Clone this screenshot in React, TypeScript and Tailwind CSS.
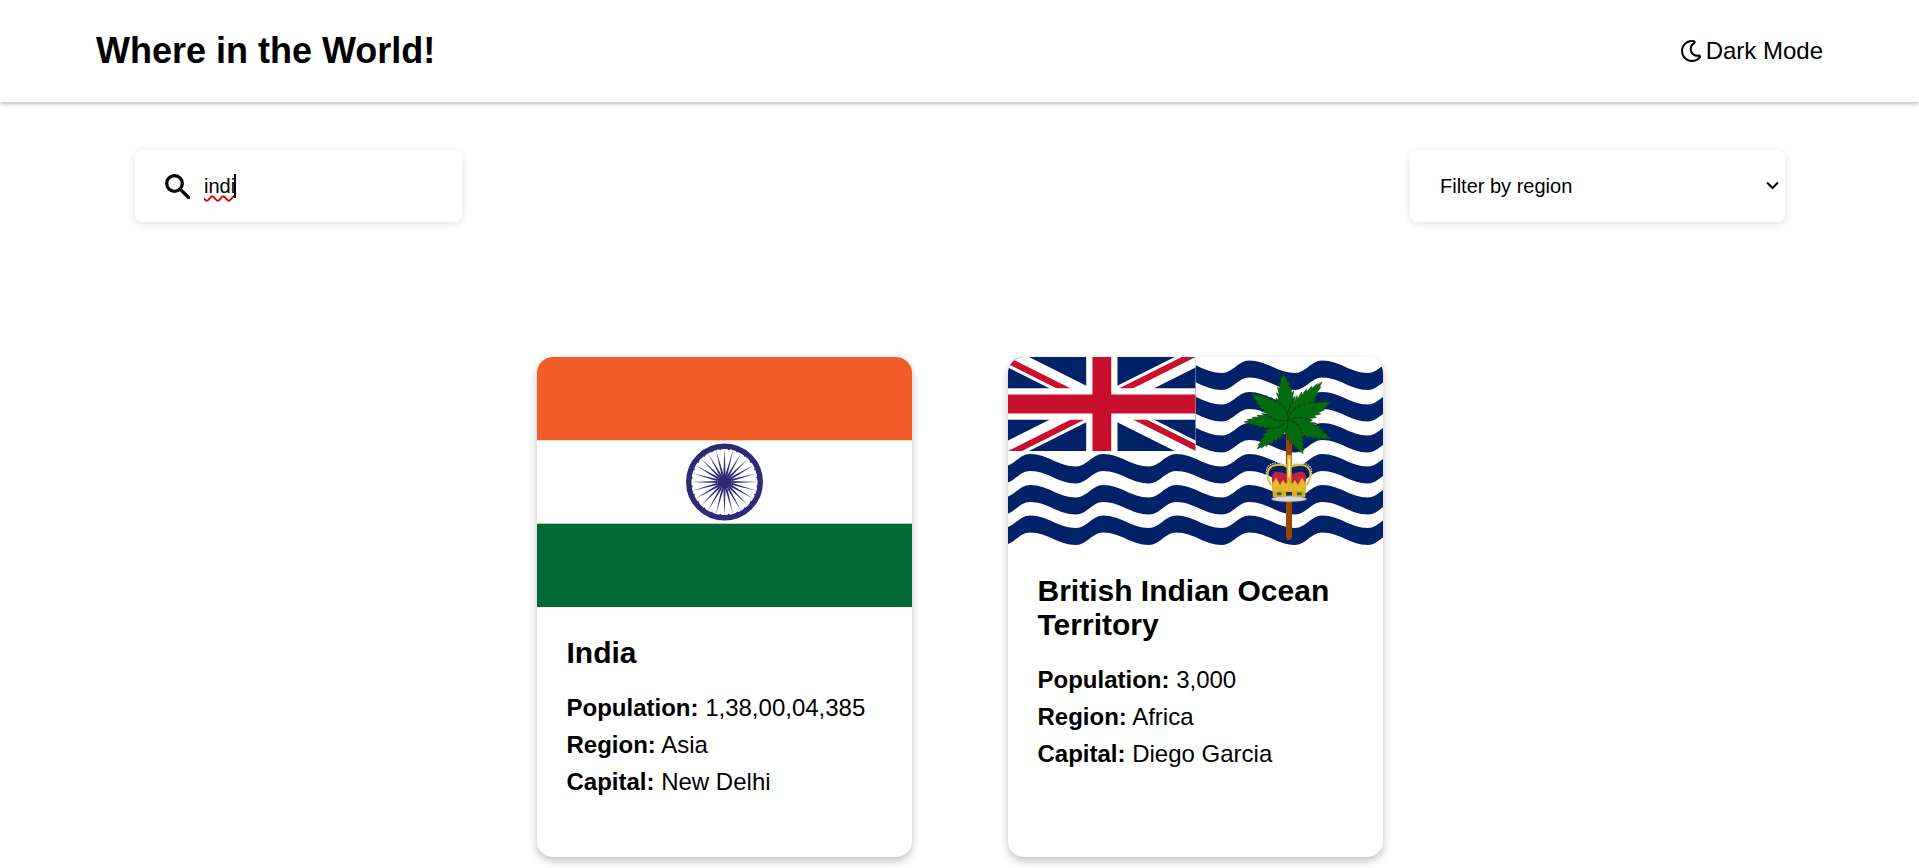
import React from "react";
import { FaRegMoon } from "react-icons/fa";

const font = "font-['Liberation_Sans',Arial,sans-serif]";

function bandPath(t: number) {
  const P = 73;
  const F = 46;
  const A = 12.5;
  const H = 17;
  const crests: number[] = [];
  for (let c = 22 - P * 2; c < 375 + P * 2; c += P) crests.push(c);
  const fh = F * 0.4;
  const rh = (P - F) * 0.4;
  let d = `M${crests[0]},${t}`;
  for (const c of crests) {
    d += ` C${c + fh},${t} ${c + F - fh},${t + A} ${c + F},${t + A}`;
    d += ` C${c + F + rh},${t + A} ${c + P - rh},${t} ${c + P},${t}`;
  }
  const last = crests[crests.length - 1] + P;
  d += ` L${last},${t + H}`;
  for (const c of [...crests].reverse()) {
    d += ` C${c + P - rh},${t + H} ${c + F + rh},${t + H + A} ${c + F},${t + H + A}`;
    d += ` C${c + F - fh},${t + H + A} ${c + fh},${t + H} ${c},${t + H}`;
  }
  return d + " Z";
}

function frondPath(x0: number, y0: number, x1: number, y1: number, w: number) {
  const dx = x1 - x0;
  const dy = y1 - y0;
  const len = Math.hypot(dx, dy);
  const ux = dx / len;
  const uy = dy / len;
  const nx = -uy;
  const ny = ux;
  const n = 9;
  const pts: string[] = [`${x0},${y0}`];
  const side = (s: number, rev: boolean) => {
    const arr: string[] = [];
    for (let i = 1; i < n; i++) {
      const f = i / n;
      const width = w * Math.sin(Math.PI * Math.pow(f, 0.7));
      const bx = x0 + dx * f;
      const by = y0 + dy * f;
      arr.push(`${(bx + nx * s * width + ux * 1.5).toFixed(1)},${(by + ny * s * width + uy * 1.5).toFixed(1)}`);
      arr.push(`${(bx + nx * s * width * 0.7 - ux * 0.5).toFixed(1)},${(by + ny * s * width * 0.7 - uy * 0.5).toFixed(1)}`);
    }
    return rev ? arr.reverse() : arr;
  };
  pts.push(...side(1, false));
  pts.push(`${x1},${y1}`);
  pts.push(...side(-1, true));
  return "M" + pts.join(" L") + " Z";
}

function IndiaFlag() {
  const spokes = Array.from({ length: 24 }, (_, i) => (i * 360) / 24);
  return (
    <svg viewBox="0 0 375 250" className="block w-full h-[250px]">
      <rect width="375" height="250" fill="#fff" />
      <rect width="375" height="83.3" fill="#f35d27" />
      <rect y="166.7" width="375" height="83.3" fill="#016934" />
      <g transform="translate(187.5 125)">
        <circle r="35.8" fill="#fff" stroke="#2e2a76" strokeWidth="5.4" />
        {spokes.map((a) => (
          <g key={a} transform={`rotate(${a})`}>
            <path d="M-1.1,-7 L0,-33.5 L1.1,-7 Z" fill="#2e2a76" />
            <circle cx="0" cy="-33" r="0.9" transform="rotate(7.5)" fill="#2e2a76" />
          </g>
        ))}
        <circle r="7.2" fill="#2e2a76" />
      </g>
    </svg>
  );
}

function BiotFlag() {
  const tips: [number, number][] = [
    [275, 15],
    [314, 25],
    [323, 45],
    [323, 82],
    [295, 97],
    [249, 92],
    [236, 65],
    [243, 36],
  ];
  return (
    <svg viewBox="0 0 375 188" className="block w-full h-[188px]">
      <rect width="375" height="188" fill="#fff" />
      {[3.5, 35, 66].map((t) => (
        <path key={t} d={bandPath(t)} fill="#012169" />
      ))}
      <rect width="187.7" height="100" fill="#fff" />
      {[97, 128, 158.5].map((t) => (
        <path key={t} d={bandPath(t)} fill="#012169" />
      ))}
      <svg x="0" y="0" width="187.7" height="94" viewBox="0 0 60 30" preserveAspectRatio="none">
        <defs>
          <clipPath id="jack">
            <path d="M30,15h30v15zv15h-30zh-30v-15zv-15h30z" />
          </clipPath>
        </defs>
        <rect width="60" height="30" fill="#012169" />
        <path d="M0,0 60,30M60,0 0,30" stroke="#fff" strokeWidth="6" />
        <path d="M0,0 60,30M60,0 0,30" clipPath="url(#jack)" stroke="#C8102E" strokeWidth="4" />
        <path d="M30,0v30M0,15h60" stroke="#fff" strokeWidth="10" />
        <path d="M30,0v30M0,15h60" stroke="#C8102E" strokeWidth="6" />
      </svg>
      <path d="M281,62 V180" stroke="#9a4500" strokeWidth="6" strokeLinecap="round" />
      {tips.map(([x, y], i) => (
        <path
          key={i}
          d={frondPath(280, 63, x, y, Math.hypot(x - 280, y - 63) > 45 ? 10 : 9)}
          fill="#046c10"
          stroke="#0e3b12"
          strokeWidth="0.5"
        />
      ))}
      {/* crown */}
      <g>
        <path d="M265,128 C262,118 265,114 271,115 C275,115.5 279,117 281,119 C283,117 287,115.5 291,115 C297,114 300,118 297,128 Z" fill="#c41f3e" />
        <path d="M263,128 C257,118 259,109 268,108 C274,107 279,109 281,112 C283,109 288,107 294,108 C303,109 305,118 299,128" fill="none" stroke="#e4bc2b" strokeWidth="2" />
        <path d="M262,125 C256,116 257,107 268,106 C274,105 279,107 281,110 C283,107 288,105 294,106 C305,107 306,116 300,125" fill="none" stroke="#dcdcdc" strokeWidth="1.2" strokeDasharray="1.4 1" />
        <rect x="279" y="98" width="4.4" height="30" fill="#e4bc2b" stroke="#b08a1c" strokeWidth="0.3" />
        <rect x="280.4" y="102" width="1.6" height="18" fill="#f5efd0" />
        <path d="M265,140 L264,127 L266,124 L268,120.5 L270,124 L272,128 L275,123 L278,127 L281,122 L284,127 L287,123 L290,128 L292,124 L294,120.5 L296,124 L298,127 L297,140 Z" fill="#e4b92c" stroke="#a5801c" strokeWidth="0.4" />
        <rect x="265" y="134" width="32" height="5.5" fill="#d9ad28" />
        <rect x="278" y="135" width="6" height="3.6" fill="#1d2b5e" />
        <rect x="269" y="135.4" width="4.5" height="2.8" fill="#2e6b3a" />
        <rect x="289" y="135.4" width="4.5" height="2.8" fill="#2e6b3a" />
        <ellipse cx="281" cy="142" rx="17.5" ry="2.8" fill="#dadada" stroke="#8c8c8c" strokeWidth="0.4" />
      </g>
    </svg>
  );
}

function Stat({ label, value }: { label: string; value: string }) {
  return (
    <p className="text-[24px] leading-[37px] text-black">
      <span className="font-bold">{label}:</span> {value}
    </p>
  );
}

function Card({
  flag,
  name,
  population,
  region,
  capital,
}: {
  flag: React.ReactNode;
  name: string;
  population: string;
  region: string;
  capital: string;
}) {
  return (
    <article className="w-[375px] h-[500px] bg-white rounded-[16px] overflow-hidden shadow-[0_4px_8px_rgba(0,0,0,0.25)]">
      {flag}
      <div className="px-[30px] pt-[29px]">
        <h2 className="text-[30px] leading-[34px] font-bold text-black mb-[19px]">{name}</h2>
        <Stat label="Population" value={population} />
        <Stat label="Region" value={region} />
        <Stat label="Capital" value={capital} />
      </div>
    </article>
  );
}

export default function App() {
  return (
    <div className={`min-h-[868px] bg-white text-black ${font}`}>
      <header className="h-[102px] px-[96px] flex items-center justify-between bg-white shadow-[0_2px_4px_rgba(0,0,0,0.25)]">
        <h1 className="text-[36px] font-bold leading-none">Where in the World!</h1>
        <div className="flex items-center gap-[4px] text-[24px] leading-none">
          <FaRegMoon size={22} color="#000" />
          <span>Dark Mode</span>
        </div>
      </header>
      <main>
        <div className="mt-[48px] ml-[135px] mr-[134px] flex justify-between">
          <div className="w-[327px] h-[72px] rounded-[8px] bg-white shadow-[0_2px_10px_rgba(0,0,0,0.12)] flex items-center pl-[30px]">
            <svg width="25" height="25" viewBox="0 0 25 25" fill="none" stroke="#000" strokeWidth="3.2">
              <circle cx="9.5" cy="9.5" r="7.8" />
              <path d="M15.2,15.2 L23.5,23.5" strokeLinecap="round" />
            </svg>
            <div className="ml-[14px] text-[20px] leading-[24px] flex items-center">
              <span className="underline decoration-wavy decoration-[#e00000] decoration-[1.5px] underline-offset-2">indi</span>
              <span className="inline-block w-[2px] h-[24px] bg-black -ml-[1px]" />
            </div>
          </div>
          <div className="relative w-[375px] h-[72px]">
            <select className="appearance-none w-full h-full rounded-[8px] bg-white shadow-[0_2px_10px_rgba(0,0,0,0.12)] pl-[30px] text-[20px] outline-none" defaultValue="">
              <option value="">Filter by region</option>
            </select>
            <svg className="absolute right-[6px] top-[31px] pointer-events-none" width="13" height="9" viewBox="0 0 13 9" fill="none" stroke="#000" strokeWidth="2">
              <path d="M1,1.5 L6.5,7 L12,1.5" />
            </svg>
          </div>
        </div>
        <div className="mt-[135px] flex justify-center gap-[96px]">
          <Card flag={<IndiaFlag />} name="India" population="1,38,00,04,385" region="Asia" capital="New Delhi" />
          <Card flag={<BiotFlag />} name="British Indian Ocean Territory" population="3,000" region="Africa" capital="Diego Garcia" />
        </div>
      </main>
    </div>
  );
}
